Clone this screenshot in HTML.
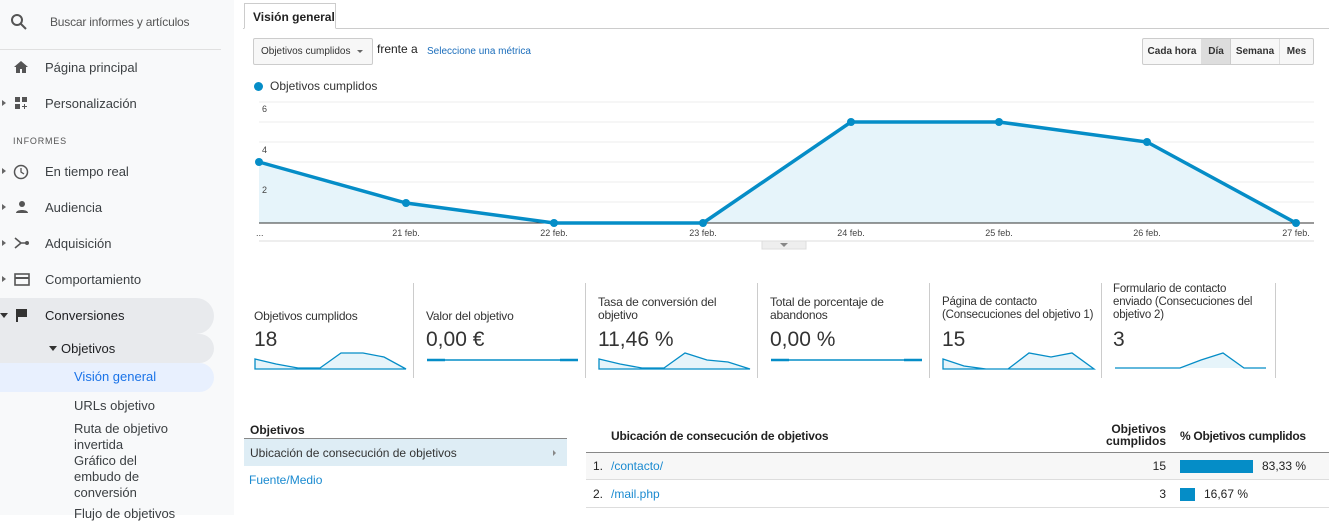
<!DOCTYPE html>
<html><head><meta charset="utf-8"><style>
*{box-sizing:border-box;margin:0;padding:0}
body{width:1329px;height:515px;overflow:hidden;background:#fff;font-family:"Liberation Sans",sans-serif;position:relative;color:#222}
.sb{position:absolute;left:0;top:0;width:234px;height:515px;background:#f8f9fa}
.a{position:absolute;white-space:nowrap}
.sb .it{position:absolute;left:45px;font-size:13px;color:#3c4043}
.tri{position:absolute;left:2px;width:0;height:0;border-top:3px solid transparent;border-bottom:3px solid transparent;border-left:4px solid #666}
.k{position:absolute;font-size:12px;color:#333;letter-spacing:-.2px}
.v{position:absolute;font-size:21px;color:#333}
.sep{position:absolute;top:283px;width:1px;height:95px;background:#ccc}
</style></head><body>
<div class="sb">
<svg class="a" style="left:10px;top:13px" width="18" height="18" viewBox="0 0 18 18"><circle cx="7" cy="7" r="5" fill="none" stroke="#555" stroke-width="2"/><path d="M11 11l5 5" stroke="#555" stroke-width="2"/></svg>
<div class="a" style="left:50px;top:15px;font-size:12px;color:#555;letter-spacing:-.2px">Buscar informes y artículos</div>
<div class="a" style="left:0;top:49px;width:221px;height:1px;background:#e0e0e0"></div>
<svg class="a" style="left:14px;top:61px" width="14" height="12"><path d="M7 0L0 6h2v6h4V8h2v4h4V6h2z" fill="#555"/></svg>
<div class="it" style="top:60px">Página principal</div>
<div class="tri" style="top:100px"></div>
<svg class="a" style="left:15px;top:97px" width="14" height="13"><rect x="0" y="0" width="5" height="5" fill="#555"/><rect x="7" y="0" width="5" height="5" fill="#555"/><rect x="0" y="7" width="5" height="5" fill="#555"/><path d="M9.5 7v5M7 9.5h5" stroke="#555"/></svg>
<div class="it" style="top:96px">Personalización</div>
<div class="a" style="left:13px;top:136px;font-size:9px;color:#555;letter-spacing:.8px">INFORMES</div>
<div class="tri" style="top:168px"></div>
<svg class="a" style="left:13px;top:164px" width="16" height="16"><circle cx="8" cy="8" r="6.5" fill="none" stroke="#555" stroke-width="1.5"/><path d="M8 4v4l3 2" stroke="#555" fill="none" stroke-width="1.3"/></svg>
<div class="it" style="top:164px">En tiempo real</div>
<div class="tri" style="top:204px"></div>
<svg class="a" style="left:15px;top:200px" width="14" height="14"><circle cx="7" cy="4" r="3" fill="#555"/><path d="M1 13c0-4 12-4 12 0z" fill="#555"/></svg>
<div class="it" style="top:200px">Audiencia</div>
<div class="tri" style="top:240px"></div>
<svg class="a" style="left:14px;top:236px" width="16" height="14"><path d="M1 2l6 5-6 5M7 7h5" stroke="#555" fill="none" stroke-width="1.6"/><circle cx="13" cy="7" r="2" fill="#555"/></svg>
<div class="it" style="top:236px">Adquisición</div>
<div class="tri" style="top:276px"></div>
<svg class="a" style="left:14px;top:273px" width="16" height="13"><rect x="1" y="1" width="14" height="11" fill="none" stroke="#555" stroke-width="1.6"/><rect x="1" y="4" width="14" height="2" fill="#555"/></svg>
<div class="it" style="top:272px">Comportamiento</div>
<div class="a" style="left:0;top:298px;width:214px;height:36px;background:#e8eaed;border-radius:0 18px 18px 0"></div>
<div class="a" style="left:0;top:334px;width:214px;height:29px;background:#e8eaed;border-radius:0 15px 15px 0"></div>
<div class="a" style="left:0;top:363px;width:214px;height:29px;background:#e8f0fe;border-radius:0 15px 15px 0"></div>
<div class="a" style="left:0;top:313px;border-left:4px solid transparent;border-right:4px solid transparent;border-top:5px solid #333"></div>
<svg class="a" style="left:16px;top:309px" width="12" height="13"><path d="M0 0h11v8H2v5H0z" fill="#333"/></svg>
<div class="it" style="top:308px;color:#202124">Conversiones</div>
<div class="a" style="left:49px;top:346px;border-left:4px solid transparent;border-right:4px solid transparent;border-top:5px solid #333"></div>
<div class="it" style="left:61px;top:341px;color:#202124">Objetivos</div>
<div class="it" style="left:74px;top:369px;color:#1a73e8">Visión general</div>
<div class="it" style="left:74px;top:398px">URLs objetivo</div>
<div class="it" style="left:74px;top:421px;line-height:16px">Ruta de objetivo<br>invertida<br>Gráfico del<br>embudo de<br>conversión</div>
<div class="it" style="left:74px;top:506px">Flujo de objetivos</div>
</div>

<div class="a" style="left:243px;top:28px;width:1086px;height:1px;background:#ccc"></div>
<div class="a" style="left:244px;top:3px;width:92px;height:26px;border:1px solid #ccc;border-bottom:1px solid #fff;background:#fff;font-size:12px;font-weight:bold;padding:6px 0 0 8px;color:#222">Visión general</div>
<div class="a" style="left:253px;top:38px;width:120px;height:27px;border:1px solid #ccc;border-radius:2px;background:#f7f7f7;font-size:10px;color:#333;padding:7px 0 0 7px">Objetivos cumplidos</div>
<div class="a" style="left:357px;top:50px;border-left:3px solid transparent;border-right:3px solid transparent;border-top:3px solid #666"></div>
<div class="a" style="left:377px;top:42px;font-size:12px">frente a</div>
<div class="a" style="left:427px;top:46px;font-size:10px;color:#1a6dbb">Seleccione una métrica</div>
<div class="a" style="left:1142px;top:38px;width:172px;height:27px;border:1px solid #ccc;border-radius:2px;background:#f7f7f7;display:flex;font-size:10px;font-weight:bold;color:#333">
<div style="width:59px;text-align:center;padding-top:7px;border-right:1px solid #ddd">Cada hora</div>
<div style="width:29px;text-align:center;padding-top:7px;background:#ddd;border-right:1px solid #ccc">Día</div>
<div style="width:49px;text-align:center;padding-top:7px;border-right:1px solid #ddd">Semana</div>
<div style="flex:1;text-align:center;padding-top:7px">Mes</div></div>
<div class="a" style="left:254px;top:82px;width:9px;height:9px;border-radius:50%;background:#058dc7"></div>
<div class="a" style="left:270px;top:79px;font-size:12px;color:#333">Objetivos cumplidos</div>

<svg class="a" style="left:0;top:0" width="1329" height="250">
<g stroke="#eee" stroke-width="1"><path d="M259 102H1314M259 122H1314M259 142H1314M259 162H1314M259 182H1314M259 202H1314"/></g>
<path d="M259 162L406 203L554 223L703 223L851 122L999 122L1147 142L1296 223L259 223Z" fill="#e6f4fa"/>
<path d="M259 223H1314" stroke="#333" stroke-width="1"/>
<path d="M259 241H1314" stroke="#ddd"/>
<path d="M259 162L406 203L554 223L703 223L851 122L999 122L1147 142L1296 223" fill="none" stroke="#058dc7" stroke-width="3.5" stroke-linejoin="round"/>
<g fill="#058dc7"><circle cx="259" cy="162" r="4"/><circle cx="406" cy="203" r="4"/><circle cx="554" cy="223" r="4"/><circle cx="703" cy="223" r="4"/><circle cx="851" cy="122" r="4"/><circle cx="999" cy="122" r="4"/><circle cx="1147" cy="142" r="4"/><circle cx="1296" cy="223" r="4"/></g>
<g font-size="9" fill="#444" font-family="Liberation Sans"><text x="262" y="112">6</text><text x="262" y="153">4</text><text x="262" y="193">2</text>
<text x="256" y="236">...</text><text x="406" y="236" text-anchor="middle">21 feb.</text><text x="554" y="236" text-anchor="middle">22 feb.</text><text x="703" y="236" text-anchor="middle">23 feb.</text><text x="851" y="236" text-anchor="middle">24 feb.</text><text x="999" y="236" text-anchor="middle">25 feb.</text><text x="1147" y="236" text-anchor="middle">26 feb.</text><text x="1296" y="236" text-anchor="middle">27 feb.</text></g>
<rect x="762" y="241" width="44" height="8" fill="#eee" stroke="#ddd"/><path d="M780 243h8l-4 4z" fill="#888"/>
</svg>

<div class="k" style="left:254px;top:309px">Objetivos cumplidos</div><div class="v" style="left:254px;top:328px">18</div>
<div class="sep" style="left:413px"></div>
<div class="k" style="left:426px;top:309px">Valor del objetivo</div><div class="v" style="left:426px;top:328px">0,00 €</div>
<div class="sep" style="left:585px"></div>
<div class="k" style="left:598px;top:296px;line-height:13px">Tasa de conversión del<br>objetivo</div><div class="v" style="left:598px;top:328px">11,46 %</div>
<div class="sep" style="left:757px"></div>
<div class="k" style="left:770px;top:296px;line-height:13px">Total de porcentaje de<br>abandonos</div><div class="v" style="left:770px;top:328px">0,00 %</div>
<div class="sep" style="left:929px"></div>
<div class="k" style="left:942px;top:296px;line-height:13px;font-size:11.5px">Página de contacto<br>(Consecuciones del objetivo 1)</div><div class="v" style="left:942px;top:328px">15</div>
<div class="sep" style="left:1101px"></div>
<div class="k" style="left:1113px;top:283px;line-height:13px;font-size:11.5px">Formulario de contacto<br>enviado (Consecuciones del<br>objetivo 2)</div><div class="v" style="left:1113px;top:328px">3</div>
<div class="sep" style="left:1275px"></div>
<svg class="a" style="left:0;top:0" width="1329" height="400">
<g fill="#e6f4fa" stroke="#058dc7" stroke-width="1.3">
<path d="M255 359L276 364L298 368L320 368L341 353L363 353L384 357L406 369H255Z"/>
<path d="M599 359L620 364L642 368L664 368L685 353L707 360L728 362L750 369H599Z"/>
<path d="M943 359L964 366L986 369L1008 369L1029 353L1051 357L1072 353L1094 369H943Z"/>
<path d="M1115 368L1137 368L1158 368L1180 368L1201 360L1223 353L1244 368L1266 368"/>
</g>
<path d="M427 360H578M771 360H922" stroke="#058dc7" stroke-width="1.5"/>
<path d="M427 360H445M560 360H578M771 360H789M904 360H922" stroke="#058dc7" stroke-width="2.5"/>
</svg>

<div class="a" style="left:250px;top:423px;font-size:12px;font-weight:bold">Objetivos</div>
<div class="a" style="left:244px;top:438px;width:323px;height:1px;background:#888"></div>
<div class="a" style="left:244px;top:439px;width:323px;height:27px;background:#deedf5;font-size:12px;color:#333;padding:7px 0 0 6px">Ubicación de consecución de objetivos</div>
<div class="a" style="left:553px;top:450px;border-top:3px solid transparent;border-bottom:3px solid transparent;border-left:3px solid #888"></div>
<div class="a" style="left:249px;top:473px;font-size:12px;color:#1a8ad0">Fuente/Medio</div>

<div class="a" style="left:611px;top:429px;font-size:12px;font-weight:bold;letter-spacing:-.2px">Ubicación de consecución de objetivos</div>
<div class="a" style="left:1100px;top:423px;width:66px;text-align:right;font-size:12px;font-weight:bold;line-height:12px">Objetivos<br>cumplidos</div>
<div class="a" style="left:1180px;top:429px;font-size:12px;font-weight:bold;letter-spacing:-.3px">% Objetivos cumplidos</div>
<div class="a" style="left:586px;top:452px;width:743px;height:1px;background:#888"></div>
<div class="a" style="left:586px;top:453px;width:743px;height:27px;background:#f7f7f7;border-bottom:1px solid #ddd"></div>
<div class="a" style="left:586px;top:480px;width:743px;height:28px;border-bottom:1px solid #ddd"></div>
<div class="a" style="left:593px;top:459px;font-size:12px">1.</div><div class="a" style="left:611px;top:459px;font-size:12px;color:#1a8ad0">/contacto/</div>
<div class="a" style="left:1120px;top:459px;width:46px;text-align:right;font-size:12px">15</div>
<div class="a" style="left:1180px;top:460px;width:73px;height:13px;background:#058dc7"></div>
<div class="a" style="left:1262px;top:459px;font-size:12px">83,33 %</div>
<div class="a" style="left:593px;top:487px;font-size:12px">2.</div><div class="a" style="left:611px;top:487px;font-size:12px;color:#1a8ad0">/mail.php</div>
<div class="a" style="left:1120px;top:487px;width:46px;text-align:right;font-size:12px">3</div>
<div class="a" style="left:1180px;top:488px;width:15px;height:13px;background:#058dc7"></div>
<div class="a" style="left:1204px;top:487px;font-size:12px">16,67 %</div>
</body></html>
